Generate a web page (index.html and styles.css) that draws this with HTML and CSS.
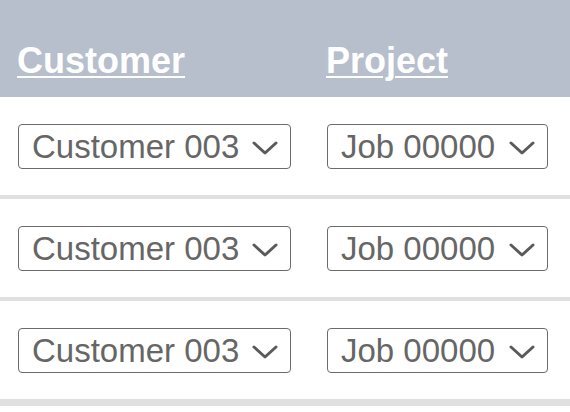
FILE: index.html
```html
<!DOCTYPE html>
<html>
<head>
<meta charset="utf-8">
<link rel="stylesheet" href="styles.css">
</head>
<body>
<div class="table">
  <div class="head">
    <div class="cell"><span class="th">Customer</span></div>
    <div class="cell"><span class="th">Project</span></div>
  </div>
  <div class="row">
    <div class="cell"><div class="sel sel-cust"><span>Customer 003</span><svg class="chev" viewBox="0 0 26 14"><path d="M2 2 L13 12 L24 2" /></svg></div></div>
    <div class="cell"><div class="sel sel-job"><span>Job 00000</span><svg class="chev" viewBox="0 0 26 14"><path d="M2 2 L13 12 L24 2" /></svg></div></div>
  </div>
  <div class="row">
    <div class="cell"><div class="sel sel-cust"><span>Customer 003</span><svg class="chev" viewBox="0 0 26 14"><path d="M2 2 L13 12 L24 2" /></svg></div></div>
    <div class="cell"><div class="sel sel-job"><span>Job 00000</span><svg class="chev" viewBox="0 0 26 14"><path d="M2 2 L13 12 L24 2" /></svg></div></div>
  </div>
  <div class="row last">
    <div class="cell"><div class="sel sel-cust"><span>Customer 003</span><svg class="chev" viewBox="0 0 26 14"><path d="M2 2 L13 12 L24 2" /></svg></div></div>
    <div class="cell"><div class="sel sel-job"><span>Job 00000</span><svg class="chev" viewBox="0 0 26 14"><path d="M2 2 L13 12 L24 2" /></svg></div></div>
  </div>
</div>
</body>
</html>
```
FILE: styles.css
```css
html, body {
  margin: 0;
  padding: 0;
  background: #ffffff;
  font-family: "Liberation Sans", Arial, sans-serif;
}
.table {
  width: 570px;
}
.head {
  display: grid;
  grid-template-columns: 309px 1fr;
  height: 97px;
  background: #b7bfcc;
  align-items: end;
}
.head .cell {
  padding-left: 17px;
  padding-bottom: 16px;
}
.th {
  color: #ffffff;
  font-weight: bold;
  font-size: 36px;
  line-height: 40px;
  text-decoration: underline;
  text-decoration-thickness: 2px;
  text-underline-offset: 3px;
}
.row {
  display: grid;
  grid-template-columns: 309px 1fr;
  height: 98px;
  border-bottom: 4px solid #e0e0e0;
  align-items: center;
}
.row.last {
  border-bottom-width: 7px;
}
.row .cell {
  padding-left: 18px;
  padding-top: 1px;
}
.sel {
  box-sizing: border-box;
  height: 45px;
  border: 1.5px solid #6b6b6b;
  border-radius: 4px;
  display: flex;
  align-items: center;
  justify-content: space-between;
  padding: 0 12px 0 13px;
  color: #666666;
  font-size: 33px;
}
.sel-cust { width: 273px; }
.sel-job { width: 221px; }
.chev {
  width: 26px;
  height: 14px;
  fill: none;
  stroke: #5a5a5a;
  stroke-width: 3;
  stroke-linecap: round;
  stroke-linejoin: round;
  margin-top: 2px;
  flex-shrink: 0;
}
```
